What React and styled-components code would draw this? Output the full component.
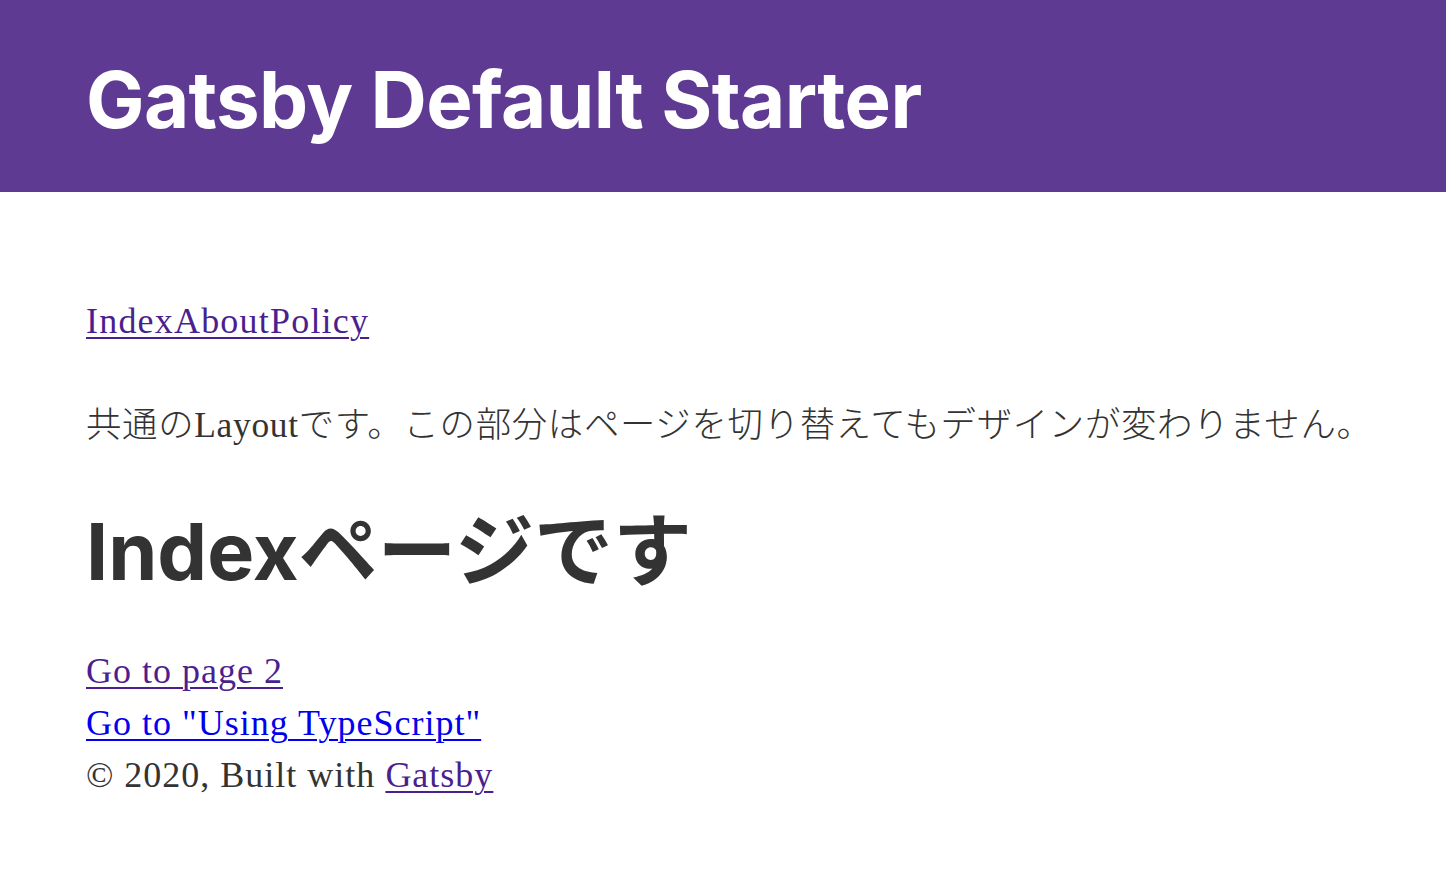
import React from 'react';
import styled, { createGlobalStyle } from 'styled-components';

const GlobalStyle = createGlobalStyle`
  html, body {
    margin: 0;
    padding: 0;
    background: #fff;
  }
  body {
    font-family: "Liberation Serif", "Noto Sans CJK JP", serif;
    font-size: 36px;
    color: #333333;
  }
`;

const Header = styled.header`
  background: #5f3a93;
  height: 192px;
  display: flex;
  align-items: center;
  padding: 8px 86px 0;
  box-sizing: border-box;
`;

const SiteTitle = styled.h1`
  margin: 0;
  font-family: Inter, "Liberation Sans", sans-serif;
  font-weight: 700;
  font-size: 78px;
  line-height: 1;
  color: #fff;
  letter-spacing: -0.6px;
`;

const Main = styled.div`
  padding: 103px 86px 0;
`;

const Nav = styled.nav`
  line-height: 52px;
  margin-bottom: 52px;
  letter-spacing: 1.2px;
`;

const Link = styled.a`
  color: ${p => (p.fresh ? '#0000ee' : '#4b1f8f')};
  text-decoration: underline;
  text-decoration-thickness: 2px;
  text-underline-offset: 4px;
`;

const Lead = styled.p`
  margin: 0 0 56px;
  font-size: 35.4px;
  line-height: 52px;
  font-weight: 300;
  letter-spacing: 0.7px;
  white-space: nowrap;
`;

const PageTitle = styled.h2`
  margin: 0 0 50px;
  font-family: Inter, "Noto Sans CJK JP", sans-serif;
  font-weight: 700;
  font-size: 79px;
  line-height: 88px;
  color: #333333;
`;

const Line = styled.div`
  line-height: 52px;
  letter-spacing: 1px;
`;

export default function App() {
  return (
    <>
      <GlobalStyle />
      <Header>
        <SiteTitle>Gatsby Default Starter</SiteTitle>
      </Header>
      <Main>
        <Nav>
          <Link href="#">Index</Link>
          <Link href="#">About</Link>
          <Link href="#">Policy</Link>
        </Nav>
        <Lead>共通のLayoutです。この部分はページを切り替えてもデザインが変わりません。</Lead>
        <PageTitle>Indexページです</PageTitle>
        <Line><Link href="#">Go to page 2</Link></Line>
        <Line><Link href="#" fresh>Go to "Using TypeScript"</Link></Line>
        <Line>© 2020, Built with <Link href="#">Gatsby</Link></Line>
      </Main>
    </>
  );
}
